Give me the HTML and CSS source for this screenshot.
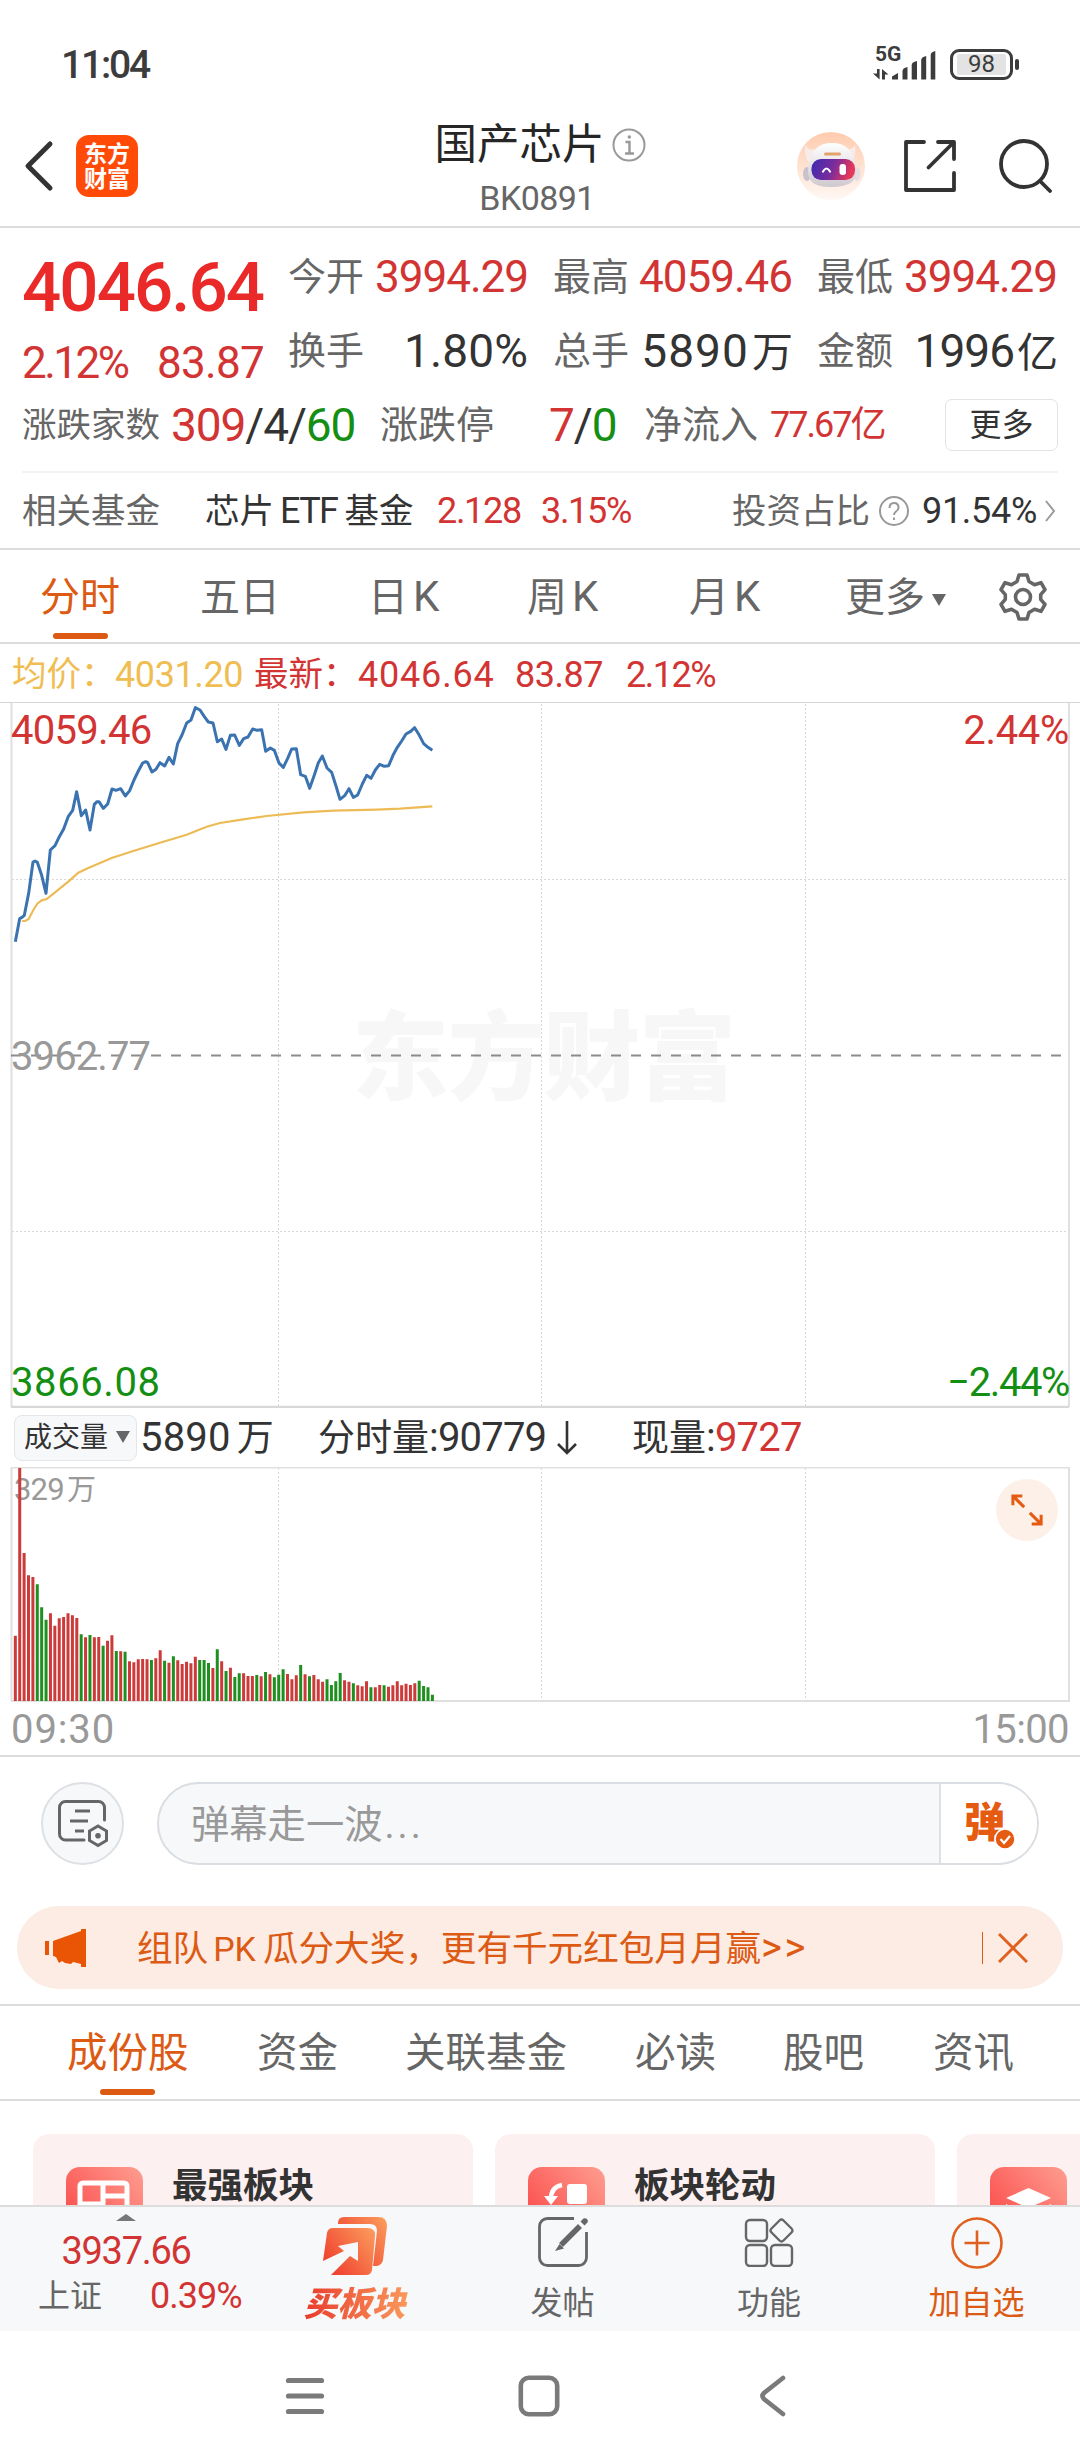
FILE: index.html
```html
<!DOCTYPE html>
<html lang="zh-CN">
<head>
<meta charset="utf-8">
<title>国产芯片 BK0891</title>
<link rel="stylesheet" href="styles.css">
</head>
<body>
<div class="status-bar">
  <span class="clock">11:04</span>
  <div class="signal">
    <span class="net">5G</span>
    <svg width="64" height="32" viewBox="0 0 64 32" fill="#3c3c3c">
      <path d="M4 21h2.6v10.5L0 25.5h4zM9 31.500V21l6.500 5.500H12v5z"/>
      <path d="M19 28.500l6-3.500v6.500h-6zM29.500 23q0-3 5-4v12.500h-5zM38.700 17q0-3 5.300-4v18.500h-5.300zM48.200 12q0-3 5-4v23.500h-5zM57.700 7q0-3 4.600-4v28.500h-4.600z"/>
    </svg>
  </div>
  <div class="battery"><span>98</span></div>
</div>

<header class="header">
  <div class="header-left">
    <svg width="30" height="52" viewBox="0 0 30 52" fill="none" stroke="#333" stroke-width="5" stroke-linecap="round" stroke-linejoin="round"><path d="M26 4L4 26l22 22"/></svg>
    <div class="logo"><span>东方</span><span>财富</span></div>
  </div>
  <div class="header-title">
    <div class="name">国产芯片
      <svg width="34" height="34" viewBox="0 0 34 34" fill="none" stroke="#999" stroke-width="2"><circle cx="17" cy="17" r="15.500"/><path d="M13.500 14H17.500V25M13 25.500h9" stroke-width="2.400"/><circle cx="17.300" cy="9" r="1.700" fill="#999" stroke="none"/></svg>
    </div>
    <div class="code">BK0891</div>
  </div>
  <div class="header-actions">
    <svg width="68" height="68" viewBox="0 0 68 68">
      <defs>
        <linearGradient id="halo" x1="0" y1="0" x2="0" y2="1"><stop offset="0" stop-color="#ffcbae"/><stop offset="1" stop-color="#fff8f4"/></linearGradient>
        <linearGradient id="visor" x1="0" y1="0" x2="1" y2=".2"><stop offset="0" stop-color="#3b2bb0"/><stop offset=".55" stop-color="#7a2c9c"/><stop offset="1" stop-color="#e8385a"/></linearGradient>
        <linearGradient id="shell" x1="0" y1="0" x2="0" y2="1"><stop offset="0" stop-color="#fff"/><stop offset="1" stop-color="#cfc8cf"/></linearGradient>
      </defs>
      <circle cx="34" cy="34" r="34" fill="url(#halo)"/>
      <path d="M8 13q4 6 10 4l-6 14q-5-8-4-18zM58 13q-4 6-10 4l6 14q6-8 4-18z" fill="#f8ece8"/>
      <ellipse cx="10" cy="42" rx="4" ry="7" fill="#c9c2cb"/><ellipse cx="60" cy="42" rx="3.500" ry="7" fill="#e4dce0"/>
      <path d="M12 32Q15 11 35 11t23 21q3 12-3 18Q48 55 34 55T15 50q-6-6-3-18z" fill="url(#shell)"/>
      <rect x="14.500" y="27" width="43.500" height="21" rx="9.500" fill="url(#visor)"/>
      <rect x="27" y="20.500" width="17" height="3" rx="1.500" fill="#e2a26c"/>
      <path d="M26 39.500q3.500-6 7 0" fill="none" stroke="#fff" stroke-width="2.200" stroke-linecap="round"/>
      <rect x="42.500" y="32" width="6.500" height="11" rx="3" fill="#fff"/>
    </svg>
    <svg class="share" width="52" height="52" viewBox="0 0 52 52" fill="none" stroke="#333" stroke-width="3.800" stroke-linecap="round" stroke-linejoin="round"><path d="M20 2H2v48h48V33M34 2h16v17M49 3L24.500 27.500"/></svg>
    <svg width="54" height="54" viewBox="0 0 54 54" fill="none" stroke="#333" stroke-width="3.800" stroke-linecap="round"><circle cx="25" cy="25" r="23"/><path d="M41 42l10 10"/></svg>
  </div>
</header>

<section class="quote">
  <div class="quote-top">
    <div class="price">
      <div class="last">4046.64</div>
      <div class="change"><span class="pct">2.12%</span><span>83.87</span></div>
    </div>
    <dl class="stats">
      <div><dt>今开</dt><dd class="up">3994.29</dd></div>
      <div><dt>最高</dt><dd class="up">4059.46</dd></div>
      <div><dt>最低</dt><dd class="up">3994.29</dd></div>
      <div><dt>换手</dt><dd class="big rate">1.80%</dd></div>
      <div><dt>总手</dt><dd class="big lots">5890<i>万</i></dd></div>
      <div><dt>金额</dt><dd class="big">1996<i>亿</i></dd></div>
    </dl>
  </div>
  <div class="breadth">
    <span class="label-s">涨跌家数</span>
    <span class="count"><b class="up">309</b>/4/<b class="down">60</b></span>
    <span class="label">涨跌停</span>
    <span class="count limit"><b class="up">7</b>/<b class="down">0</b></span>
    <span class="label">净流入</span>
    <span class="inflow up">77.67亿</span>
    <button class="more-btn">更多</button>
  </div>
  <div class="fund">
    <span class="label-s">相关基金</span>
    <span class="fund-name">芯片<em>ETF</em>基金</span>
    <span class="up">2.128</span>
    <span class="up">3.15%</span>
    <span class="label-s">投资占比</span>
    <svg width="32" height="32" viewBox="0 0 32 32" fill="none" stroke="#999" stroke-width="2"><circle cx="16" cy="16" r="14"/><path d="M11.500 13q0-5 4.500-5t4.500 4.500q0 2.500-2.500 4-2 1.500-2 3.500M16 22.500v2.500"/></svg>
    <span class="ratio">91.54%</span>
    <svg class="chev" width="12" height="22" viewBox="0 0 12 22" fill="none" stroke="#999" stroke-width="2"><path d="M2 1l8 10-8 10"/></svg>
  </div>
</section>

<nav class="period-tabs">
  <span class="tab active">分时</span>
  <span class="tab">五日</span>
  <span class="tab">日<em>K</em></span>
  <span class="tab">周<em>K</em></span>
  <span class="tab">月<em>K</em></span>
  <span class="tab">更多<i class="caret-down"></i></span>
  <svg width="50" height="50" viewBox="0 0 50 50" fill="none" stroke="#666" stroke-width="3.600" stroke-linejoin="round"><path d="M21 3h8l2 6.500 5.500 3.200 6.500-2 4 7-4.300 5v4.600l4.300 5-4 7-6.500-2-5.500 3.200L29 47h-8l-2-6.500-5.500-3.200-6.500 2-4-7 4.300-5v-4.600L3 17.700l4-7 6.500 2L19 9.500z"/><circle cx="25" cy="25" r="7.500"/></svg>
</nav>

<div class="legend">
  <span class="avg">均价：</span><span class="avg">4031.20</span>
  <span class="up">最新：</span><span class="up wide">4046.64</span><span class="up">83.87</span><span class="up">2.12%</span>
</div>

<section class="chart price-chart">
  <svg class="plot" viewBox="0 702 1080 706" width="1080" height="706" fill="none">
    <text class="watermark" x="352" y="1092" textLength="384">东方财富</text>
    <path class="grid" d="M278.500 704V1406M541.500 704V1406M805.500 704V1406M12 879.500H1069M12 1231.500H1069"/>
    <path class="frame" d="M11.500 702V1407M1069 702V1407"/>
    <path d="M0 702.500H1080" stroke="#d6d6d6"/>
    <path d="M11 1407H1069" stroke="#d8d8d8" stroke-width="2.500"/>
    <path d="M11 1055.500H1066" stroke="#8c8c8c" stroke-width="2" stroke-dasharray="10 10"/>
    <g transform="translate(0 690) scale(.33333)">
      <polyline stroke="#edbb55" stroke-width="6.500" points="66,693 76,693 86,687 100,660 112,641 125,631 140,627 165,607 205,575 235,548 265,534 335,504 400,483 480,458 560,434 620,410 660,399 730,388 800,378 910,367 1000,362 1130,359 1200,356 1297,349"/>
      <polyline stroke="#3a73b0" stroke-width="9" stroke-linejoin="round" points="46,755 59,686 66,682 73,676 86,610 99,516 105,513 112,517 125,556 138,610 151,480 165,467 178,440 191,417 205,379 218,361 230,305 244,377 257,360 270,420 283,343 291,335 297,335 310,355 323,342 336,297 348,301 362,296 376,318 389,302 402,270 415,243 428,219 437,215 443,218 456,246 468,238 480,218 494,228 507,202 520,222 533,161 546,135 560,99 573,90 586,53 600,60 613,80 625,96 639,99 652,155 665,147 678,178 691,136 704,135 718,166 731,146 744,141 758,117 771,121 785,119 797,184 811,174 823,181 837,219 850,232 863,205 875,177 889,176 902,254 916,259 929,295 943,255 955,218 967,198 981,234 995,247 1008,288 1020,328 1034,317 1047,296 1060,322 1073,315 1087,282 1100,256 1113,265 1126,240 1139,223 1153,229 1166,227 1179,196 1192,172 1205,153 1218,132 1232,124 1244,113 1258,136 1271,161 1284,172 1297,181"/>
    </g>
  </svg>
  <div class="axis up"><span>4059.46</span><span class="p">2.44%</span></div>
  <div class="axis mid"><span>3962.77</span></div>
  <div class="axis low down"><span>3866.08</span><span class="p">−2.44%</span></div>
</section>

<div class="volume-legend">
  <span class="picker">成交量<i class="caret-down"></i></span>
  <span class="total">5890<i>万</i></span>
  <span class="minute"><i>分时量</i>:90779</span>
  <svg width="22" height="36" viewBox="0 0 22 36" fill="none" stroke="#333" stroke-width="2.600"><path d="M11 1v32M2 24l9 9 9-9"/></svg>
  <span class="now"><i>现量</i>:<b class="up">9727</b></span>
</div>

<section class="chart volume-chart">
  <svg class="plot" viewBox="0 1467 1080 235" width="1080" height="235" fill="none">
    <path class="grid" d="M278.500 1468V1700M541.500 1468V1700M805.500 1468V1700"/>
    <path class="frame" d="M11.500 1467V1701M1069 1467V1701M11 1467.500H1070M11 1701H1070"/>
    <text class="vol-max" x="14" y="1500">329<tspan dx="3" font-size="29">万</tspan></text>
    <path id="vol-up" stroke="#cc3a3a" stroke-width="3"/>
    <path id="vol-down" stroke="#1f8f1f" stroke-width="3"/>
  </svg>
  <button class="expand"><svg width="32" height="32" viewBox="0 0 34 34" fill="none" stroke="#e55b12" stroke-width="3.200"><path d="M2 12V2h10M3 3l11 11M32 22v10H22M31 31L20 20"/></svg></button>
</section>
<div class="time-axis"><span class="open">09:30</span><span>15:00</span></div>

<section class="danmu">
  <div class="danmu-set">
    <svg width="52" height="52" viewBox="0 0 52 52" fill="none" stroke="#666" stroke-width="3"><path d="M27 42H8.500a6 6 0 0 1-6-6V9.500a6 6 0 0 1 6-6h33a6 6 0 0 1 6 6V22" stroke-linecap="round"/><path d="M18 13h15M13 23h18M18 33h9"/><path d="M41 28l8.500 5v9.500L41 47.500l-8.500-5V33z"/><circle cx="41" cy="37.700" r="2.800" fill="#666" stroke="none"/></svg>
  </div>
  <div class="danmu-input">
    <span class="hint">弹幕走一波<u>...</u></span>
    <span class="toggle">弹<svg width="22" height="22" viewBox="0 0 22 22"><circle cx="11" cy="11" r="10" fill="#e55b12" stroke="#fff" stroke-width="1.500"/><path d="M6.500 11l3.500 4 6-7" fill="none" stroke="#fff" stroke-width="2.200"/></svg></span>
  </div>
</section>

<section class="banner">
  <svg width="44" height="38" viewBox="0 0 44 38" fill="#e95504"><path d="M1 12h4v14H1zM9 12L37 2V0h5v38h-5v-3l-8-2-2 2-6-1-3-2-3 2-3-6-3-1z"/></svg>
  <span class="msg">组队<em>PK</em>瓜分大奖，更有千元红包月月赢<u>&gt;&gt;</u></span>
  <i class="sep"></i>
  <svg width="30" height="30" viewBox="0 0 30 30" stroke="#e0601f" stroke-width="3"><path d="M1 1l28 28M29 1L1 29"/></svg>
</section>

<nav class="section-tabs">
  <span class="tab active">成份股</span>
  <span class="tab">资金</span>
  <span class="tab">关联基金</span>
  <span class="tab">必读</span>
  <span class="tab">股吧</span>
  <span class="tab">资讯</span>
</nav>

<section class="cards">
  <article class="card">
    <svg width="77" height="77" viewBox="0 0 77 77"><defs><linearGradient id="red" x1="0" y1=".8" x2="1" y2="0"><stop offset="0" stop-color="#fb4848"/><stop offset="1" stop-color="#fe9e90"/></linearGradient></defs><rect width="77" height="77" rx="14" fill="url(#red)"/><rect x="14" y="16" width="47" height="46" rx="3" fill="none" stroke="#fff" stroke-width="5"/><path d="M37 14v50M14 37h23M37 29h24M37 42h24" stroke="#fff" stroke-width="5"/></svg>
    <h3>最强板块</h3>
  </article>
  <article class="card">
    <svg width="77" height="77" viewBox="0 0 77 77"><rect width="77" height="77" rx="14" fill="url(#red)"/><rect x="39" y="17" width="20" height="20" rx="3" fill="#fff"/><path d="M34 18Q23 20 23 32" fill="none" stroke="#fff" stroke-width="4.500"/><path d="M16 29h14l-7 9z" fill="#fff"/><rect x="18" y="42" width="20" height="20" rx="3" fill="#fff"/></svg>
    <h3>板块轮动</h3>
  </article>
  <article class="card">
    <svg width="77" height="77" viewBox="0 0 77 77"><rect width="77" height="77" rx="14" fill="url(#red)"/><path d="M38.500 21L61 31 38.500 41 16 31zM16 37l22.500 10L61 37v6L38.500 53 16 43z" fill="#fff"/></svg>
  </article>
</section>

<footer class="toolbar">
  <div class="index">
    <i class="caret-up"></i>
    <span class="val">3937.66</span>
    <span class="sub"><b>上证</b><span>0.39%</span></span>
  </div>
  <div class="tool buy">
    <svg width="66" height="60" viewBox="0 0 66 60"><defs><linearGradient id="hot" x1="0" y1=".8" x2="1" y2=".1"><stop offset="0" stop-color="#ef3b2c"/><stop offset="1" stop-color="#fb9a5c"/></linearGradient></defs><path d="M16 7Q16 1 22 1h34q9 0 9 9l-4 34q-1 5-6 6h-4l4-35q0-7-7-7H16z" fill="url(#hot)"/><path d="M5 17q1-5 6-5h34q9 0 8 8l-3 34q-1 5-6 5H9l19-19 8 5V26l-20 4 6 5L1 45z" fill="url(#hot)"/></svg>
    <span>买板块</span>
  </div>
  <div class="tool">
    <svg width="50" height="50" viewBox="0 0 50 50" fill="none" stroke="#666" stroke-width="2.800"><path d="M36 1.500H9.500a8 8 0 0 0-8 8v31a8 8 0 0 0 8 8h31a8 8 0 0 0 8-8V15"/><path d="M23 28l19-19" stroke-width="5.500"/><path d="M21.500 27l4.500 4.500-9 2.500zM42.500 4.500l3-3a3 3 0 0 1 4 4l-3 3z" fill="#666" stroke="none"/></svg>
    <span>发帖</span>
  </div>
  <div class="tool">
    <svg width="50" height="50" viewBox="0 0 50 50" fill="none" stroke="#666" stroke-width="2.400"><rect x="2" y="3" width="21" height="21" rx="4"/><rect x="2" y="28" width="21" height="21" rx="4"/><rect x="27" y="28" width="21" height="21" rx="4"/><path d="M35.500 3.500q2-2 4 0l8 8q2 2 0 4l-8 8q-2 2-4 0l-8-8q-2-2 0-4z"/></svg>
    <span>功能</span>
  </div>
  <div class="tool add">
    <svg width="52" height="52" viewBox="0 0 52 52" fill="none" stroke="#e0601f" stroke-width="2.600"><circle cx="26" cy="26" r="24.500"/><path d="M26 13.500v25M13.500 26h25"/></svg>
    <span>加自选</span>
  </div>
</footer>

<div class="sys-nav">
  <svg width="40" height="40" viewBox="0 0 40 40" stroke="#7a7a7a" stroke-width="5.200" stroke-linecap="round"><path d="M3.500 4.500h33M3.500 20h33M3.500 35.500h33"/></svg>
  <svg width="42" height="42" viewBox="0 0 42 42" fill="none" stroke="#7a7a7a" stroke-width="4.600"><rect x="2.800" y="2.800" width="36.400" height="36.400" rx="8"/></svg>
  <svg width="28" height="42" viewBox="0 0 28 42" fill="none" stroke="#7a7a7a" stroke-width="4.600" stroke-linecap="round"><path d="M24 3L5 18q-3 3 0 6l19 15"/></svg>
</div>
<script src="volume.js"></script>
</body>
</html>
```
FILE: styles.css
```css
* { box-sizing: border-box; margin: 0; padding: 0; }
body {
  width: 1080px; height: 2460px; overflow: hidden; background: #fff; color: #333;
  font-family: Roboto, "Noto Sans CJK SC", sans-serif; line-height: 1;
  display: flex; flex-direction: column;
}
body > * { flex: none; }
span, button, h3, dt, dd { white-space: nowrap; }
i, em, u { font-style: normal; text-decoration: none; }
b { font-weight: 400; }
svg { display: block; flex: none; }
button { font: inherit; border: 0; }
.up { color: #d23433; }
.down { color: #148f14; }

.status-bar { height: 104px; padding: 24px 67px 0 61px; display: flex; align-items: center; }
.clock { font-size: 39px; font-weight: 500; color: #3c3c3c; letter-spacing: -2.200px; margin-right: auto; padding-top: 2px; }
.signal { position: relative; width: 64px; height: 32px; margin-right: 13px; }
.net { position: absolute; left: 2px; top: -4px; font-size: 21px; font-weight: 700; color: #3c3c3c; }
.battery { position: relative; width: 63px; height: 31px; border: 3px solid #3c3c3c; border-radius: 9px; padding: 2px 4px; }
.battery span { display: block; height: 21px; line-height: 21px; border-radius: 2px; text-align: center; background: #e3e3e3; color: #3c3c3c; font-size: 24px; }
.battery::after { content: ""; position: absolute; right: -9px; top: 7px; width: 4px; height: 11px; border-radius: 2px; background: #3c3c3c; }

.header { height: 124px; border-bottom: 2px solid #dcdcdc; padding: 0 27px 0 24px; display: grid; grid-template-columns: 1fr auto 1fr; }
.header-left { display: flex; align-items: center; gap: 22px; height: 123px; }
.logo { width: 62px; height: 62px; border-radius: 13px; background: #ff4a08; color: #fff; font-weight: 700; font-size: 23px; line-height: 25px; padding-top: 7px; display: flex; flex-direction: column; align-items: center; }
.header-title { display: flex; flex-direction: column; align-items: center; padding-top: 20px; }
.name { display: flex; align-items: center; gap: 7px; font-size: 42.500px; color: #262626; white-space: nowrap; margin-left: 3px; }
.code { margin-top: 14px; font-size: 34px; color: #666; letter-spacing: -.6px; margin-right: 3px; }
.header-actions { display: flex; align-items: center; justify-content: flex-end; gap: 39px; height: 123px; }
.share { margin-right: 4px; }

.quote { height: 322px; border-bottom: 2px solid #dcdcdc; padding: 0 22px; }
.quote-top { height: 166px; display: flex; padding-top: 21px; gap: 24px; }
.price { width: 242px; color: #e92a28; }
.last { font-size: 69px; font-weight: 500; line-height: 78px; letter-spacing: -1.900px; }
.change { display: flex; justify-content: space-between; font-size: 44px; line-height: 73px; letter-spacing: -.7px; color: #d23433; }
.change .pct { letter-spacing: -2.500px; }
.stats { flex: 1; display: grid; grid-template-columns: 240px 239px 240px; grid-auto-rows: 74px; column-gap: 25px; margin-top: -9px; }
.stats div { display: flex; align-items: center; justify-content: space-between; }
dt, .label { font-size: 38px; color: #666; }
.label-s { font-size: 34.500px; color: #666; }
dd { font-size: 44px; letter-spacing: -1px; }
dd.big { font-size: 46px; }
dd.rate { letter-spacing: .1px; }
dd.lots { letter-spacing: 1.100px; }
dd i { font-size: 41px; margin-left: 3px; letter-spacing: -1px; }
.breadth { height: 77px; padding-bottom: 15px; display: grid; align-items: center; grid-template-columns: 149px 209px 169px 95px 126px 175px 113px; }
.count { font-size: 46px; letter-spacing: -1.100px; }
.inflow { font-size: 36px; letter-spacing: -2px; }
.more-btn { height: 52px; background: #fff; border: 1.500px solid #e3e3e3; border-radius: 7px; font-size: 32px; color: #333; }
.fund { border-top: 2px solid #f3f3f3; height: 77px; padding-top: 1px; display: grid; align-items: center; grid-template-columns: 183px 232px 104px 191px 146px 44px 122px 12px; font-size: 36px; letter-spacing: -1.300px; }
.fund .label-s { letter-spacing: 0; }
.fund-name { font-size: 34.500px; letter-spacing: 0; }
.fund-name em { font-size: 36px; margin: 0 7px 0 6px; letter-spacing: -1.600px; }
.fund .ratio { letter-spacing: -.3px; }

.period-tabs { height: 94px; border-bottom: 2px solid #dcdcdc; display: grid; grid-template-columns: 160px 168px 159px 162px 156px 156px 50px; padding-left: 40px; align-items: center; }
.tab { position: relative; font-size: 40px; line-height: 93px; color: #666; }
.tab em { font-size: 42px; margin-left: 5px; }
.tab.active { color: #dc5a14; }
.tab.active::after { content: ""; position: absolute; left: 13px; bottom: 5px; width: 55px; height: 6px; border-radius: 3px; background: #dc5a14; }
.period-tabs svg { margin-left: -3px; }
.caret-down { display: inline-block; border: 7px solid transparent; border-top: 12px solid #666; border-bottom: 0; vertical-align: 5px; margin-left: 7px; }

.legend { height: 58px; padding: 3px 0 0 12px; display: grid; grid-template-columns: 103px 139px 104px 157px 111px 100px; align-items: center; font-size: 36px; letter-spacing: -.4px; }
.legend span:nth-child(odd) { letter-spacing: 0; font-size: 34.500px; }
.legend .wide { letter-spacing: .8px; }
.legend span:nth-child(5) { font-size: 36px; letter-spacing: -.5px; }
.legend span:nth-child(6) { letter-spacing: -1.500px; }
.avg { color: #efbd52; }

.chart { position: relative; }
.plot { position: absolute; inset: 0; }
.grid { stroke: #d8d8d8; stroke-width: 1; stroke-dasharray: 2 2; }
.frame { stroke: #e0e0e0; stroke-width: 2; }
.watermark { font: 900 97px "Noto Sans CJK SC", sans-serif; fill: #f7f7f7; }
.price-chart { height: 706px; display: flex; flex-direction: column; justify-content: space-between; padding: 9px 11px 5px 11px; }
.axis { position: relative; display: flex; justify-content: space-between; font-size: 40px; line-height: 40px; letter-spacing: -.7px; }
.axis .p { letter-spacing: -.3px; }
.axis.mid { color: #999; letter-spacing: -.9px; }
.axis.low { letter-spacing: .6px; }
.axis.low .p { letter-spacing: -1.400px; }

.volume-legend { height: 59px; padding-top: 1px; display: grid; grid-template-columns: 126px 178px 238px 76px 200px; align-items: center; padding-left: 14px; font-size: 40px; letter-spacing: -.8px; }
.volume-legend i { font-size: 37px; letter-spacing: 0; }
.total { letter-spacing: .2px; }
.volume-legend .total i { margin-left: 6px; }
.picker { width: 123px; height: 46px; background: #f6f8fa; border: 1.500px solid #e3e6ea; border-radius: 8px; font-size: 28px; line-height: 43px; padding-left: 9px; letter-spacing: 0; }
.picker .caret-down { margin-left: 8px; vertical-align: 4px; }
.volume-chart { height: 235px; }
.vol-max { font-size: 31px; letter-spacing: -.8px; fill: #999; }
.expand { position: absolute; left: 996px; top: 12px; width: 62px; height: 62px; border-radius: 50%; background: #fdf0e8; display: flex; align-items: center; justify-content: center; }
.time-axis { height: 55px; border-bottom: 2px solid #dcdcdc; display: flex; justify-content: space-between; padding: 8px 11px 0 11px; font-size: 40px; letter-spacing: -.6px; color: #999; }
.open { letter-spacing: .9px; }

.danmu { height: 149px; padding: 25px 41px 0; display: flex; gap: 33px; }
.danmu-set { width: 83px; height: 83px; border-radius: 50%; background: #f6f8fa; border: 2px solid #dde0e4; display: flex; align-items: center; justify-content: center; }
.danmu-input { flex: 1; height: 83px; border-radius: 42px; border: 2px solid #dadde1; background: #f6f8fa; display: flex; overflow: hidden; }
.hint { flex: 1; padding-left: 32px; font-size: 38.300px; line-height: 81px; color: #999; }
.hint u { letter-spacing: 3px; margin-left: 2px; }
.toggle { position: relative; width: 98px; background: #fff; border-left: 2px solid #dde0e4; padding-left: 23px; font-size: 41px; font-weight: 900; line-height: 78px; color: #e55b12; }
.toggle svg { position: absolute; left: 53px; top: 44px; }

.banner { height: 83px; margin: 0 17px 0; border-radius: 42px; background: #fcece3; display: flex; align-items: center; padding: 0 35px 0 27px; color: #dc5a14; }
.msg { margin-left: 49px; font-size: 35.600px; }
.msg em { font-size: 34px; margin: 0 7px 0 5px; }
.msg u { font-size: 40px; letter-spacing: 2.500px; }
.sep { width: 1.500px; height: 32px; background: #dc5a14; margin: 0 15px 0 auto; }

.section-tabs { margin-top: 15px; height: 97px; border: 2px solid #dcdcdc; border-width: 2px 0; padding-left: 67px; display: grid; grid-template-columns: 190px 148px 230px 148px 150px 100px; }
.section-tabs .tab { font-size: 40.500px; line-height: 95px; }
.section-tabs .active::after { left: 33px; bottom: 6px; }

.cards { height: 104px; padding: 33px 0 0 33px; display: flex; gap: 22px; overflow: hidden; }
.card { flex: none; width: 440px; height: 160px; background: #fdf0f0; border-radius: 16px; padding: 33px; display: flex; gap: 29px; }
.card h3 { font-size: 35.500px; font-weight: 700; line-height: 38px; }

.toolbar { height: 126px; border-top: 2px solid #dcdcdc; background: #f6f8fa; display: grid; grid-template-columns: 252px 208px 205px 208px 207px; }
.index { display: flex; flex-direction: column; align-items: center; color: #d23433; padding-top: 7px; }
.caret-up { border: 10px solid transparent; border-bottom: 7px solid #777; border-top: 0; }
.val { font-size: 38px; margin-top: 11px; letter-spacing: -1.300px; }
.sub { display: grid; grid-template-columns: 112px 92px; align-items: center; margin-top: 8px; font-size: 36px; letter-spacing: -1px; margin-left: 28px; }
.sub b { font-size: 32px; color: #666; letter-spacing: 0; }
.tool { display: flex; flex-direction: column; align-items: center; padding-top: 10px; font-size: 32px; color: #666; }
.tool span { margin-top: 20px; line-height: 32px; }
.buy { padding-top: 9px; margin-left: -3px; }
.buy span { margin-top: 10px; font-size: 34px; line-height: 36px; font-weight: 900; font-style: italic; background: linear-gradient(90deg, #e8392b, #fb9a5c); -webkit-background-clip: text; background-clip: text; color: transparent; padding: 0 4px; }
.add { color: #dc5a14; }
.add span { margin-top: 18px; }

.sys-nav { height: 129px; display: grid; grid-template-columns: 233px 241px 40px; padding: 0 0 0 285px; align-items: center; }
```
FILE: volume.js
```js
// Minute bars: distance of the bar's top from the chart's origin (thirds of a pixel) and direction.
const bars = "527r 24r 279r 346r 351r 373g 442g 479g 460r 497r 475r 471r 460r 466r 474r 523g 532r 525g 532r 531r 557g 542r 526r 573g 574r 575g 604r 607r 598r 597r 598r 600g 595r 571r 602g 608r 589g 601r 612r 605r 610r 590r 600g 600g 609g 624r 568g 604r 633g 623r 651g 640g 640r 648r 648r 645g 649r 636g 643r 652g 644g 628g 642r 658r 646r 615g 643r 649g 645r 658r 665r 658g 675g 664g 639g 661r 665r 670g 676r 679r 664r 682g 682r 675r 676g 680r 676r 664r 676r 671r 675r 670r 662g 678g 682g 704g".split(" ");
const paths = { r: "", g: "" };
bars.forEach((bar, i) => {
  const x = (15.33 + i * 4.39).toFixed(2);
  const y = (1460 + parseInt(bar, 10) / 3).toFixed(1);
  paths[bar.slice(-1)] += `M${x} 1701V${y}`;
});
document.getElementById("vol-up").setAttribute("d", paths.r);
document.getElementById("vol-down").setAttribute("d", paths.g);
```
